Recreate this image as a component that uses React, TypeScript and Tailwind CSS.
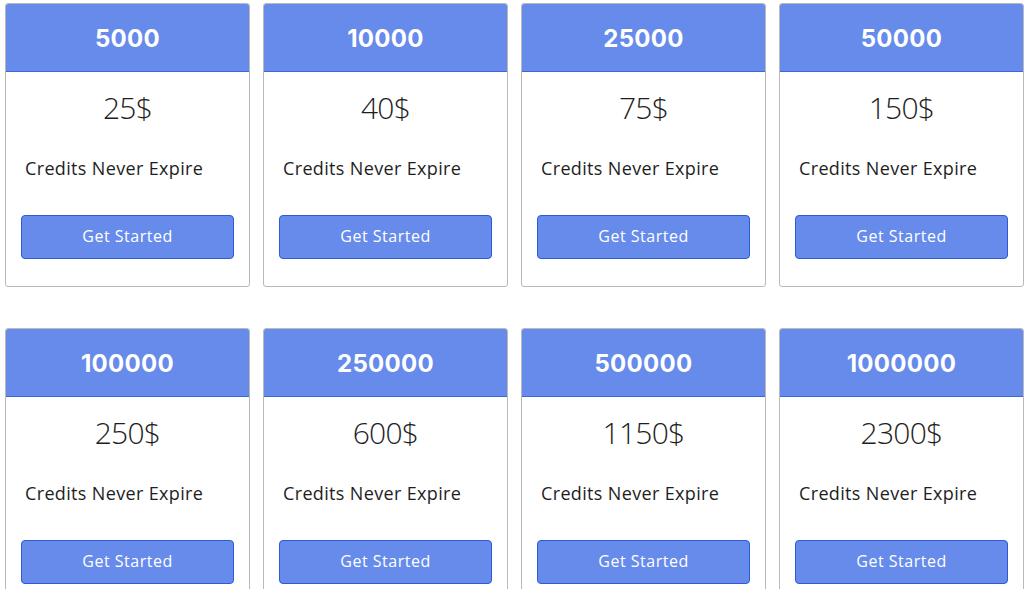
import React from "react";

const plans = [
  { credits: "5000", price: "25$" },
  { credits: "10000", price: "40$" },
  { credits: "25000", price: "75$" },
  { credits: "50000", price: "150$" },
  { credits: "100000", price: "250$" },
  { credits: "250000", price: "600$" },
  { credits: "500000", price: "1150$" },
  { credits: "1000000", price: "2300$" },
];

const PlanCard = ({ credits, price }: { credits: string; price: string }) => (
  <div className="flex flex-col overflow-hidden rounded-[3px] border border-[#b9b9b9] bg-white pb-[27px]">
    <div className="flex h-[68px] items-center justify-center border-b border-[#3d67d8] bg-[#678bea] pt-[2px] font-['Inter',sans-serif] text-[24px] font-bold tracking-[0.3px] text-white">
      {credits}
    </div>
    <div className="mt-[19px] text-center font-['Open_Sans',sans-serif] text-[30px] font-light leading-[34px] tracking-tight text-[#1e1e1e]">
      {price}
    </div>
    <div className="mt-[30px] px-[19px] font-['Open_Sans',sans-serif] text-[18px] leading-[26px] tracking-[0.35px] text-[#1e1e1e]">
      Credits Never Expire
    </div>
    <button
      type="button"
      className="mx-[15px] mt-[34px] h-[44px] rounded-[4px] border border-[#2d5ad6] bg-[#678bea] pb-[2px] font-['Open_Sans',sans-serif] text-[16px] tracking-[0.5px] text-white"
    >
      Get Started
    </button>
  </div>
);

export default function App() {
  return (
    <div className="min-h-screen bg-white px-[5px] pt-[3px] pr-[4px]">
      <div className="grid grid-cols-4 gap-x-[13px] gap-y-[41px]">
        {plans.map((p) => (
          <PlanCard key={p.credits} credits={p.credits} price={p.price} />
        ))}
      </div>
    </div>
  );
}
